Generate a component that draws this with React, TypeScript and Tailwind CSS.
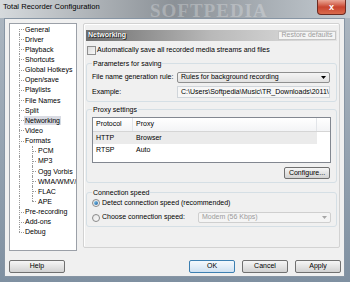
import type { ReactNode } from "react";

type TreeItem = { t: string; l: number; first?: boolean; last?: boolean; sel?: boolean };

const tree: TreeItem[] = [
  { t: "General", l: 0, first: true },
  { t: "Driver", l: 0 },
  { t: "Playback", l: 0 },
  { t: "Shortcuts", l: 0 },
  { t: "Global Hotkeys", l: 0 },
  { t: "Open/save", l: 0 },
  { t: "Playlists", l: 0 },
  { t: "File Names", l: 0 },
  { t: "Split", l: 0 },
  { t: "Networking", l: 0, sel: true },
  { t: "Video", l: 0 },
  { t: "Formats", l: 0 },
  { t: "PCM", l: 1, first: true },
  { t: "MP3", l: 1 },
  { t: "Ogg Vorbis", l: 1 },
  { t: "WMA/WMV/A", l: 1 },
  { t: "FLAC", l: 1 },
  { t: "APE", l: 1, last: true },
  { t: "Pre-recording", l: 0 },
  { t: "Add-ons", l: 0 },
  { t: "Debug", l: 0, last: true },
];

function TreeRow({ item }: { item: TreeItem }) {
  const dot = "border-dotted border-[#9a9a9a]";
  return (
    <div className="flex h-[10.15px] items-center whitespace-nowrap">
      <div className="relative h-full w-[14px] shrink-0">
        <div
          className={`absolute left-[9px] w-0 border-l ${dot} ${
            item.l === 0 && item.first ? "top-1/2 bottom-0" : item.l === 0 && item.last ? "top-0 bottom-1/2" : "top-0 bottom-0"
          }`}
        />
        {item.l === 0 && <div className={`absolute left-[9px] top-1/2 w-[5px] border-t ${dot}`} />}
      </div>
      {item.l === 1 && (
        <div className="relative h-full w-[13px] shrink-0">
          <div className={`absolute left-[8px] w-0 border-l ${dot} ${item.last ? "top-0 bottom-1/2" : "top-0 bottom-0"}`} />
          <div className={`absolute left-[8px] top-1/2 w-[4px] border-t ${dot}`} />
        </div>
      )}
      <span className={`px-[1px] leading-[9px] ${item.sel ? "bg-[#d9dbe3]" : ""}`}>{item.t}</span>
    </div>
  );
}

function Btn({ children, w, def }: { children: ReactNode; w: string; def?: boolean }) {
  return (
    <div
      className={`${w} flex h-[13px] items-center justify-center rounded-[2px] border ${
        def
          ? "border-[#3c7fb1] bg-gradient-to-b from-[#f4f9fd] via-[#e3eef8] to-[#cfe1f1]"
          : "border-[#707070] bg-gradient-to-b from-[#f6f6f6] via-[#e4e4e4] to-[#d2d2d2]"
      }`}
    >
      {children}
    </div>
  );
}

function Arrow({ color }: { color: string }) {
  return (
    <svg width="5" height="3" viewBox="0 0 5 3" className="shrink-0">
      <polygon points="0,0 5,0 2.5,3" fill={color} />
    </svg>
  );
}

function Radio({ on }: { on?: boolean }) {
  return (
    <div className="flex h-[8px] w-[8px] shrink-0 items-center justify-center rounded-full border border-[#8a8a8a] bg-gradient-to-br from-[#e6e6e6] to-[#fafafa]">
      {on && <div className="h-[4px] w-[4px] rounded-full bg-gradient-to-br from-[#8ad0f5] to-[#1a5d9a]" />}
    </div>
  );
}

export default function App() {
  return (
    <div className="relative h-[282px] w-[350px] overflow-hidden bg-gradient-to-b from-[#aeb8c2] to-[#7f90a1] font-['Liberation_Sans',Arial,sans-serif] text-[7px] text-black">
      {/* title bar */}
      <div className="relative flex h-[18px] items-start bg-gradient-to-r from-[#d6dadd] via-[#8b9197] to-[#c4cbd1] pl-[3px] pt-[2px]">
        <span className="text-[7.6px] leading-[9px]">Total Recorder Configuration</span>
        <span className="absolute left-[150px] top-[-3px] text-[19px] font-bold tracking-[1px] text-white/25 font-['Liberation_Serif',serif]">
          SOFTPEDIA
        </span>
      </div>
      <div className="absolute right-[4px] top-0 flex h-[15px] w-[29px] items-center justify-center rounded-b-[4px] border border-t-0 border-[#6b2b22] bg-gradient-to-b from-[#e9a797] via-[#c8442f] to-[#d96a4c]">
        <span className="text-[9px] font-bold leading-[9px] text-white">x</span>
      </div>

      {/* client */}
      <div className="mx-[4px] h-[259px] w-[341px] border border-[#8795a4] bg-[#f0f0f0] pl-[4px] pr-[3px] pt-[4px]">
        <div className="flex items-start">
          {/* tree */}
          <div className="h-[228px] w-[68px] shrink-0 overflow-hidden border border-[#9ba0a8] bg-white">
            {tree.map((it) => (
              <TreeRow key={it.t} item={it} />
            ))}
          </div>

          {/* right panel */}
          <div className="ml-[6px] h-[225px] w-[257px] shrink-0 rounded-[2px] border border-[#d2d2d2] px-[2px] pt-[6px] shadow-[inset_1px_1px_0_#fff]">
            <div className="flex h-[11px] items-center justify-between bg-gradient-to-r from-[#6f6f6f] via-[#b9b9b9] to-[#e4e4e4] pl-[2px]">
              <span className="font-bold text-white [text-shadow:0_0_1px_#000,1px_1px_0_#333]">Networking</span>
              <div className="mr-[1px] flex h-[9px] w-[58px] items-center justify-center border border-[#c6c6c6] bg-[#f4f4f4] text-[#9c9c9c]">
                Restore defaults
              </div>
            </div>

            <div className="mt-[4px] flex h-[10px] items-center gap-[1px] pl-[1px]">
              <div className="h-[9px] w-[9px] border border-[#8f8f8f] bg-gradient-to-br from-[#dcdcdc] to-[#f8f8f8]" />
              <span>Automatically save all recorded media streams and files</span>
            </div>

            {/* parameters */}
            <fieldset className="mt-[4px] rounded-[3px] border border-[#d5dfe5] pb-[3px] pl-[5px] pr-[6px]">
              <legend className="px-[1px] leading-[9px]">Parameters for saving</legend>
              <div className="mt-[4px] flex h-[11px] items-center">
                <span className="w-[85px] shrink-0">File name generation rule:</span>
                <div className="flex h-[11px] w-[153px] items-center justify-between rounded-[2px] border border-[#8e8f8f] bg-gradient-to-b from-[#f4f4f4] to-[#e2e2e2] pl-[3px] pr-[3px]">
                  <span>Rules for background recording</span>
                  <Arrow color="#000" />
                </div>
              </div>
              <div className="mt-[3px] flex h-[12px] items-center">
                <span className="w-[85px] shrink-0">Example:</span>
                <div className="flex h-[12px] w-[153px] items-center overflow-hidden whitespace-nowrap border border-[#d0d5da] bg-[#f6f6f6] pl-[3px]">
                  C:\Users\Softpedia\Music\TR_Downloads\2011\
                </div>
              </div>
            </fieldset>

            {/* proxy */}
            <fieldset className="mt-[2.5px] rounded-[3px] border border-[#d5dfe5] pb-[3px] pl-[5px] pr-[5px]">
              <legend className="px-[1px] leading-[9px]">Proxy settings</legend>
              <div className="mt-[3.5px] h-[46px] border border-[#828790] bg-white">
                <div className="flex h-[14px] border-b border-[#d5d5d5] bg-gradient-to-b from-white to-[#f3f4f6]">
                  <div className="flex w-[40px] items-center border-r border-[#e2e5e9] pl-[3px]">Protocol</div>
                  <div className="flex w-[184px] items-center border-r border-[#e2e5e9] pl-[3px]">Proxy</div>
                  <div className="flex-1" />
                </div>
                <div className="flex h-[12px] w-[224px] items-center bg-[#ebebeb]">
                  <span className="w-[40px] pl-[3px]">HTTP</span>
                  <span className="pl-[3px]">Browser</span>
                </div>
                <div className="flex h-[12px] w-[224px] items-center">
                  <span className="w-[40px] pl-[3px]">RTSP</span>
                  <span className="pl-[3px]">Auto</span>
                </div>
              </div>
              <div className="mt-[4px] flex justify-end pr-[1px]">
                <div className="flex h-[12px] w-[46px] items-center justify-center rounded-[2px] border border-[#707070] bg-gradient-to-b from-[#f6f6f6] via-[#e4e4e4] to-[#d2d2d2]">
                  Configure...
                </div>
              </div>
            </fieldset>

            {/* connection speed */}
            <fieldset className="mt-[4.5px] rounded-[3px] border border-[#d5dfe5] pb-[3px] pl-[5px] pr-[5px]">
              <legend className="px-[1px] leading-[9px]">Connection speed</legend>
              <div className="mt-[1.5px] flex h-[10px] items-center gap-[2px]">
                <Radio on />
                <span>Detect connection speed (recommended)</span>
              </div>
              <div className="mt-[4px] flex h-[11px] items-center gap-[2px]">
                <Radio />
                <span>Choose connection speed:</span>
                <div className="ml-auto flex h-[11px] w-[133px] items-center justify-between rounded-[2px] border border-[#cfcfcf] bg-[#f4f4f4] pl-[3px] pr-[3px] text-[#9b9b9b]">
                  <span>Modem (56 Kbps)</span>
                  <Arrow color="#a6a6a6" />
                </div>
              </div>
            </fieldset>
          </div>
        </div>

        {/* bottom buttons */}
        <div className="mt-[9px] flex items-center justify-between">
          <Btn w="w-[56px]">Help</Btn>
          <div className="flex gap-[7px]">
            <Btn w="w-[46px]" def>
              OK
            </Btn>
            <Btn w="w-[46px]">Cancel</Btn>
            <Btn w="w-[46px]">Apply</Btn>
          </div>
        </div>
      </div>
    </div>
  );
}
